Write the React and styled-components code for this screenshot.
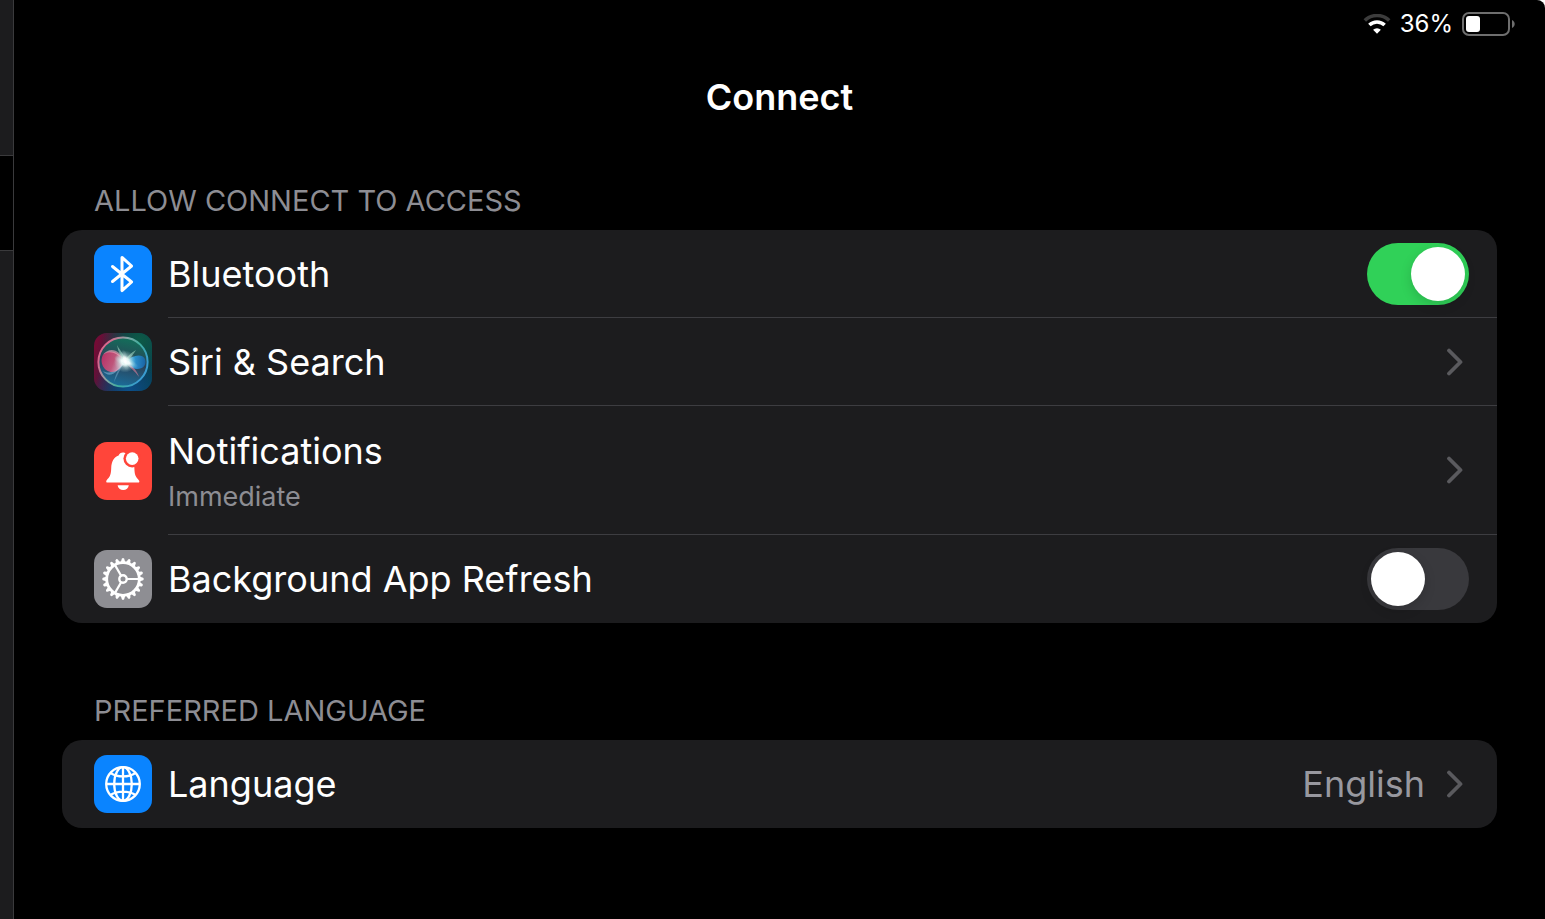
import React, { useId, useState } from 'react';
import styled, { createGlobalStyle } from 'styled-components';

const GlobalStyle = createGlobalStyle`
  * {
    box-sizing: border-box;
  }

  body {
    margin: 0;
    background: #fff;
    font-family: Inter, 'Liberation Sans', sans-serif;
  }

  button, input {
    font: inherit;
    color: inherit;
  }
`;

const Screen = styled.div`
  display: flex;
  min-height: 100vh;
  background: #000;
  color: #fff;
  border-top-right-radius: 8px;
  overflow: hidden;
`;

/* only the trailing edge of the split view's list is on screen */
const Sidebar = styled.aside`
  display: flex;
  flex-direction: column;
  width: 14px;
  flex-shrink: 0;
  background: #1c1c1e;
  border-right: 1px solid #3a3a3c;
`;

const SidebarGap = styled.div`
  height: 96px;
  margin-top: 155px;
  background: #000;
  border-top: 1px solid #3a3a3c;
  border-bottom: 1px solid #3a3a3c;
`;

const Main = styled.main`
  flex: 1;
  min-width: 0;
  padding: 0 48px 48px;
`;

const StatusBar = styled.div`
  display: flex;
  align-items: center;
  justify-content: flex-end;
  gap: 9px;
  height: 48px;
  margin-right: -18px;
  font-size: 24px;
  line-height: 28px;
`;

const Title = styled.h1`
  margin: 0 0 56px;
  padding-top: 24px;
  font-size: 36px;
  line-height: 50px;
  font-weight: 600;
  text-align: center;
`;

const Section = styled.section`
  & + & {
    margin-top: 65px;
  }
`;

const SectionTitle = styled.h2`
  margin: 0;
  padding: 5px 32px 11px;
  font-size: 29px;
  line-height: 36px;
  font-weight: 400;
  text-transform: uppercase;
  color: #8d8d93;
`;

const Card = styled.ul`
  margin: 0;
  padding: 0;
  list-style: none;
  background: #1c1c1e;
  border-radius: 20px;
  overflow: hidden;
`;

const Row = styled.div`
  display: flex;
  align-items: center;
  gap: 16px;
  width: 100%;
  min-height: 88px;
  padding: 0 0 0 32px;
  border: 0;
  background: none;
  text-align: left;
`;

const RowBody = styled.span`
  display: flex;
  align-items: center;
  flex: 1;
  align-self: stretch;
  min-height: ${(p) => (p.$tall ? '129px' : '88px')};
  padding-right: ${(p) => (p.$nav ? '34px' : '28px')};
  border-bottom: 1px solid #3d3d41;

  li:last-child & {
    border-bottom-color: transparent;
  }
`;

const Labels = styled.span`
  display: flex;
  flex-direction: column;
  gap: 8px;
  flex: 1;
`;

const Label = styled.span`
  font-size: 36px;
  line-height: 46px;
`;

const Detail = styled.span`
  font-size: 27px;
  line-height: 30px;
  color: #8d8d93;
`;

const Value = styled.span`
  margin-right: 21px;
  font-size: 36px;
  line-height: 46px;
  color: #98989f;
`;

const Tile = styled.svg`
  width: 58px;
  height: 58px;
  flex-shrink: 0;
  border-radius: 13px;
  background: ${(p) => p.$color};
`;

const Switch = styled.input`
  appearance: none;
  display: flex;
  align-items: center;
  width: 102px;
  height: 62px;
  margin: 0;
  padding: 4px;
  border-radius: 31px;
  background: #39393d;
  cursor: pointer;

  &::before {
    content: '';
    width: 54px;
    height: 54px;
    border-radius: 50%;
    background: #fff;
    box-shadow: 0 4px 12px rgba(0, 0, 0, 0.15);
  }

  &:checked {
    justify-content: flex-end;
    background: #30d158;
  }
`;

const ChevronIcon = styled.svg`
  width: 17px;
  height: 28px;
  flex-shrink: 0;
`;

const Chevron = () => (
  <ChevronIcon viewBox="0 0 17 28" fill="none" aria-hidden="true">
    <path d="M3 2.500 14.500 14 3 25.500" stroke="#5a5a5e" strokeWidth="3.800" strokeLinecap="round" strokeLinejoin="round" />
  </ChevronIcon>
);

const BluetoothIcon = () => (
  <Tile $color="#0a84ff" viewBox="0 0 58 58" aria-hidden="true">
    <path
      d="M18.5 21.5 37.6 37 28 45.6V12.4L37.6 21 18.5 36.5"
      fill="none"
      stroke="#fff"
      strokeWidth="3"
      strokeLinecap="round"
      strokeLinejoin="round"
    />
  </Tile>
);

const SiriIcon = () => (
  <Tile $color="#17252f" viewBox="0 0 58 58" aria-hidden="true">
    <defs>
      <linearGradient id="siriBase" x1="0" y1="0.4" x2="1" y2="0.6">
        <stop offset="0" stopColor="#740b35" />
        <stop offset="0.45" stopColor="#1c2945" />
        <stop offset="1" stopColor="#063f50" />
      </linearGradient>
      <radialGradient id="siriGreen" cx="0.78" cy="0.12" r="0.65">
        <stop offset="0" stopColor="#0c5a46" />
        <stop offset="1" stopColor="#0c5a46" stopOpacity="0" />
      </radialGradient>
      <radialGradient id="siriBlue" cx="0.6" cy="1" r="0.6">
        <stop offset="0" stopColor="#0b4f8a" />
        <stop offset="1" stopColor="#0b4f8a" stopOpacity="0" />
      </radialGradient>
      <linearGradient id="siriRing" x1="0.1" y1="0.3" x2="0.9" y2="0.7">
        <stop offset="0" stopColor="#d8688d" />
        <stop offset="0.35" stopColor="#83a6a5" />
        <stop offset="0.65" stopColor="#3fae9d" />
        <stop offset="1" stopColor="#3a9cd0" />
      </linearGradient>
      <linearGradient id="siriOrb" x1="0.6" y1="0" x2="0.4" y2="1">
        <stop offset="0" stopColor="#12705a" />
        <stop offset="0.5" stopColor="#2a4258" />
        <stop offset="1" stopColor="#1a6e9c" />
      </linearGradient>
      <linearGradient id="siriPink" x1="0" y1="0" x2="1" y2="0.3">
        <stop offset="0" stopColor="#cf2a67" />
        <stop offset="0.6" stopColor="#d9587f" />
        <stop offset="1" stopColor="#e8c6da" />
      </linearGradient>
      <linearGradient id="siriCyan" x1="0" y1="0" x2="1" y2="0">
        <stop offset="0" stopColor="#c9f4ff" />
        <stop offset="0.4" stopColor="#2fa3e6" />
        <stop offset="1" stopColor="#1767b0" />
      </linearGradient>
      <radialGradient id="siriGlow">
        <stop offset="0" stopColor="#fff" />
        <stop offset="0.3" stopColor="#fff" stopOpacity="0.95" />
        <stop offset="0.55" stopColor="#d5f5f0" stopOpacity="0.45" />
        <stop offset="1" stopColor="#bdece6" stopOpacity="0" />
      </radialGradient>
    </defs>
    <rect width="58" height="58" fill="url(#siriBase)" />
    <rect width="58" height="58" fill="url(#siriGreen)" />
    <rect width="58" height="58" fill="url(#siriBlue)" />
    <circle cx="29" cy="29" r="24.600" fill="url(#siriOrb)" stroke="url(#siriRing)" strokeWidth="2" />
    <path d="M31 29C24 38 16 47 9 38c9 5 16-3 22-9Z" fill="#79b5d8" opacity="0.6" />
    <path d="M31 29C25 17 13 16 9 22c-4 7 1 17 9 17 6 0 9-5 13-10Z" fill="url(#siriPink)" opacity="0.85" />
    <path d="M31 29C22 18 13 17 8 23c7-10 18-7 23 6Z" fill="#f2a6ba" opacity="0.6" />
    <path d="M31 29c7-7 17-9 20-3 2 6-2 10-8 10-5 0-8-3-12-7Z" fill="url(#siriCyan)" opacity="0.85" />
    <path d="M31 29c7 3 12 8 14 15-4-6-9-9-14-15Z" fill="#e07f9b" opacity="0.6" />
    <path d="M31 29c-4 5-7 12-11 20 2-9 5-15 11-20Z" fill="#8fc5e8" opacity="0.4" />
    <path d="M31 29c-4-5-7-10-8-17 3 6 9 11 8 17ZM31 29c2-6 6-9 11-12-3 5-6 9-11 12Z" fill="#b5f0d6" opacity="0.5" />
    <circle cx="31" cy="28.500" r="11" fill="url(#siriGlow)" />
    <ellipse cx="32" cy="29" rx="13" ry="4.500" fill="url(#siriGlow)" opacity="0.8" transform="rotate(22 32 29)" />
    <ellipse cx="31" cy="27" rx="4" ry="11" fill="url(#siriGlow)" opacity="0.6" transform="rotate(-12 31 27)" />
  </Tile>
);

const NotificationsIcon = () => (
  <Tile $color="#ff453a" viewBox="0 0 58 58" aria-hidden="true">
    <path
      d="M12.600 40.600c-1-1.200 0-2.600 1.200-3.800 2.400-2.600 3.200-4.600 3.400-10.600.2-6.200 2.600-11 7.400-12.600.8-2.200 2.800-3.400 5.200-3 3 .6 4 2.600 4.600 4 2 1.400 6 3.600 6 12 .2 5.800 1 8 3.400 10.400 1.200 1.200 2.200 2.400 1.200 3.600Z"
      fill="#fff"
    />
    <path d="M23.600 43.200h11.200c-.4 3-2.600 4.800-5.600 4.800s-5.200-1.800-5.600-4.800Z" fill="#fff" />
    <circle cx="38.200" cy="16.600" r="8.800" fill="#ff453a" />
    <circle cx="38.200" cy="16.600" r="6.300" fill="#fff" />
  </Tile>
);

const TEETH = Array.from({ length: 20 }, (_, i) => i * 18);

const GearIcon = () => (
  <Tile $color="#8e8e93" viewBox="0 0 58 58" aria-hidden="true">
    <g fill="none" stroke="#fff">
      <circle cx="29" cy="29" r="16.300" strokeWidth="2.800" />
      <circle cx="29" cy="29" r="3.700" strokeWidth="2.400" />
      {[0, 120, 240].map((angle) => (
        <path key={angle} d="M33 29H45" strokeWidth="2.200" transform={`rotate(${angle} 29 29)`} />
      ))}
    </g>
    {TEETH.map((angle) => (
      <path key={angle} d="M46 26.800 49.200 27.800q1.400 1.200 0 2.400L46 31.200Z" fill="#fff" transform={`rotate(${angle} 29 29)`} />
    ))}
  </Tile>
);

const GlobeIcon = () => (
  <Tile $color="#0a84ff" viewBox="0 0 58 58" aria-hidden="true">
    <g fill="none" stroke="#fff" strokeWidth="2.300">
      <circle cx="29" cy="29" r="16.800" />
      <ellipse cx="29" cy="29" rx="8.800" ry="16.800" />
      <path d="M29 12v34M12 29h34M16.500 18c7 4.600 18 4.600 25 0M16.500 40c7-4.600 18-4.600 25 0" />
    </g>
  </Tile>
);

const WifiIcon = () => (
  <svg width="28" height="20" viewBox="0 0 28 20" aria-label="Wi-Fi" role="img">
    <path d="M1.800 6.500a17.500 17.500 0 0 1 24.400 0" fill="none" stroke="#3c3c3c" strokeWidth="3.600" />
    <path d="M6.400 11a11 11 0 0 1 15.200 0" fill="none" stroke="#fff" strokeWidth="3.600" />
    <path d="M10.100 15.700a5.800 5.800 0 0 1 7.800 0L14 19.800Z" fill="#fff" />
  </svg>
);

const BatteryIcon = () => (
  <svg width="53" height="24" viewBox="0 0 53 24" aria-hidden="true">
    <rect x="1" y="1" width="46" height="22" rx="6" fill="none" stroke="#6e6e6e" strokeWidth="2" />
    <rect x="4" y="4" width="14" height="16" rx="3" fill="#fff" />
    <path d="M50 8c3.600 1.400 3.600 6.600 0 8Z" fill="#6e6e6e" />
  </svg>
);

const SwitchRow = ({ icon, label, defaultOn = false }) => {
  const [on, setOn] = useState(defaultOn);
  const id = useId();

  return (
    <li>
      <Row>
        {icon}
        <RowBody>
          <Labels>
            <Label as="label" htmlFor={id}>{label}</Label>
          </Labels>
          <Switch id={id} type="checkbox" role="switch" checked={on} onChange={(e) => setOn(e.target.checked)} />
        </RowBody>
      </Row>
    </li>
  );
};

const NavRow = ({ icon, label, detail, value }) => (
  <li>
    <Row as="button" type="button">
      {icon}
      <RowBody $nav $tall={Boolean(detail)}>
        <Labels>
          <Label>{label}</Label>
          {detail && <Detail>{detail}</Detail>}
        </Labels>
        {value && <Value>{value}</Value>}
        <Chevron />
      </RowBody>
    </Row>
  </li>
);

const App = () => (
  <>
    <GlobalStyle />
    <Screen>
      <Sidebar>
        <SidebarGap />
      </Sidebar>
      <Main>
        <StatusBar>
          <WifiIcon />
          <span>36%</span>
          <BatteryIcon />
        </StatusBar>
        <Title>Connect</Title>
        <Section>
          <SectionTitle>Allow Connect to Access</SectionTitle>
          <Card>
            <SwitchRow icon={<BluetoothIcon />} label="Bluetooth" defaultOn />
            <NavRow icon={<SiriIcon />} label="Siri & Search" />
            <NavRow icon={<NotificationsIcon />} label="Notifications" detail="Immediate" />
            <SwitchRow icon={<GearIcon />} label="Background App Refresh" />
          </Card>
        </Section>
        <Section>
          <SectionTitle>Preferred Language</SectionTitle>
          <Card>
            <NavRow icon={<GlobeIcon />} label="Language" value="English" />
          </Card>
        </Section>
      </Main>
    </Screen>
  </>
);

export default App;
